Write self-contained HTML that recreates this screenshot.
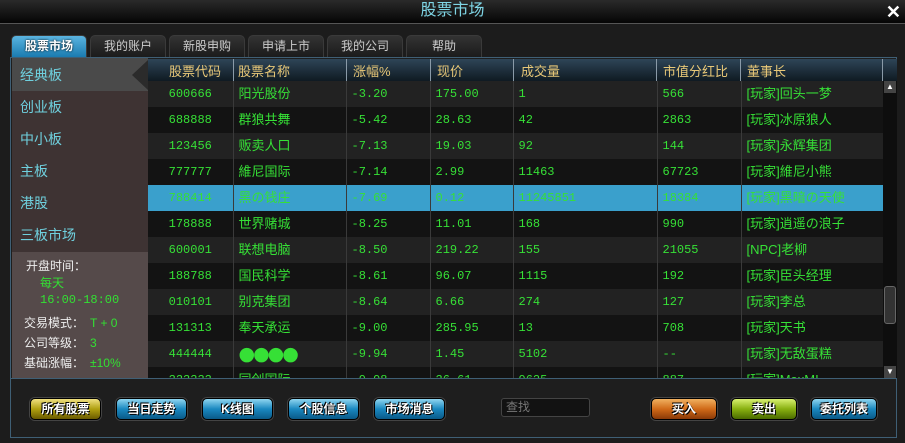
<!DOCTYPE html>
<html><head><meta charset="utf-8"><style>
*{margin:0;padding:0;box-sizing:border-box}
body{width:905px;height:443px;background:#1c1c1c;font-family:"Liberation Sans","Noto Sans CJK SC",sans-serif;position:relative;overflow:hidden;font-size:12px}
.title{position:absolute;left:0;top:0;width:905px;height:24px;background:linear-gradient(#2a2a2a,#050505);border-bottom:1px solid #555;color:#7fd6e6;font-size:16px;text-align:center;line-height:22px}
.close{position:absolute;right:4px;top:1px;color:#fff;font-size:18px;font-weight:bold}
.tab{position:absolute;top:35px;height:22px;width:76px;background:linear-gradient(#333,#1b1b1b);border:1px solid #3a3a3a;border-bottom:none;border-radius:5px 5px 0 0;color:#ccc;text-align:center;line-height:21px;font-size:12px}
.tab.on{background:linear-gradient(#5ab4e0,#1a7bb0);color:#fff;font-weight:bold;text-shadow:0 0 2px #000}
.frame{position:absolute;left:10px;top:57px;width:887px;height:381px;border:1px solid #3f5f75;background:#1e1e1e}
.side{position:absolute;left:12px;top:58px;width:136px;height:320px;background:#3e3333}
.side .it{position:absolute;left:8px;color:#6fd0de;font-size:14px}
.sel{position:absolute;left:12px;top:58px;width:136px;height:33px;background:#4a4a4a}
.notch{position:absolute;left:132px;top:60px;width:0;height:0;border-top:15px solid transparent;border-bottom:15px solid transparent;border-right:16px solid #2b2b2b}
.info{position:absolute;left:12px;top:252px;width:136px;height:126px;background:#554a4a;color:#eee;font-size:12px}
.info div{position:absolute}
.g{color:#33e033}
.hdr{position:absolute;left:148px;top:59px;width:749px;height:22px;background:linear-gradient(#2e4557,#0f1a22);color:#e8c878;font-size:13px}
.hdr span{position:absolute;top:2px}
.hdr i{position:absolute;top:0;width:1px;height:22px;background:#8a9aa8}
table{width:735px;table-layout:fixed;border-collapse:collapse;font-family:"Liberation Mono","Noto Sans CJK SC",monospace;font-size:12px;color:#36e036}
td{height:26px;border-right:1px solid #3a3a3a;padding-left:5px;white-space:nowrap;overflow:hidden;line-height:16px}
tr:nth-child(odd){background:#222}
tr:nth-child(even){background:#131313}
tr.hl{background:#3aa0cc}
td.c{text-align:center;padding-left:0}
td.n{font-family:"Liberation Sans","Noto Sans CJK SC",sans-serif;font-size:13px}
.tb{position:absolute;left:148px;top:81px;width:735px;height:297px;overflow:hidden}
.sb{position:absolute;left:883px;top:81px;width:14px;height:297px;background:#0e0e0e}
.btn{position:absolute;top:398px;height:22px;width:71px;border-radius:5px;color:#fff;font-weight:bold;text-align:center;line-height:21px;font-size:12px;text-shadow:1px 1px 0 #000,-1px -1px 0 #000;border:1px solid #000;box-shadow:0 0 0 1px #444}
.blue{background:linear-gradient(#8fd6f0,#1a88c0 50%,#0a5a88)}
</style></head><body>
<div class="title">股票市场<span class="close">✕</span></div>
<div class="tab on" style="left:11px">股票市场</div>
<div class="tab" style="left:90px">我的账户</div>
<div class="tab" style="left:169px">新股申购</div>
<div class="tab" style="left:248px">申请上市</div>
<div class="tab" style="left:327px">我的公司</div>
<div class="tab" style="left:406px">帮助</div>
<div class="frame"></div>
<div class="side"></div>
<div class="sel"></div><div class="notch"></div>
<div class="side" style="background:none">
<div class="it" style="top:7px">经典板</div>
<div class="it" style="top:39px">创业板</div>
<div class="it" style="top:71px">中小板</div>
<div class="it" style="top:103px">主板</div>
<div class="it" style="top:135px">港股</div>
<div class="it" style="top:167px">三板市场</div>
</div>
<div class="info">
<div style="left:14px;top:5px">开盘时间：</div>
<div class="g" style="left:28px;top:22px">每天</div>
<div class="g" style="left:28px;top:41px;font-family:'Liberation Mono',monospace">16:00-18:00</div>
<div style="left:12px;top:62px">交易模式：<span class="g" style="margin-left:6px">T + 0</span></div>
<div style="left:12px;top:82px">公司等级：<span class="g" style="margin-left:6px">3</span></div>
<div style="left:12px;top:102px">基础涨幅：<span class="g" style="margin-left:6px">±10%</span></div>
</div>
<div class="hdr">
<span style="left:21px">股票代码</span><i style="left:85px"></i>
<span style="left:90px">股票名称</span><i style="left:198px"></i>
<span style="left:205px">涨幅%</span><i style="left:282px"></i>
<span style="left:289px">现价</span><i style="left:365px"></i>
<span style="left:373px">成交量</span><i style="left:508px"></i>
<span style="left:515px">市值分红比</span><i style="left:592px"></i>
<span style="left:599px">董事长</span><i style="left:734px"></i>
</div>
<div class="tb"><table>
<colgroup><col style="width:85px"><col style="width:113px"><col style="width:84px"><col style="width:83px"><col style="width:144px"><col style="width:84px"><col style="width:142px"></colgroup>
<tr><td class="c">600666</td><td class="n">阳光股份</td><td>-3.20</td><td>175.00</td><td>1</td><td>566</td><td class="n">[玩家]回头一梦</td></tr>
<tr><td class="c">688888</td><td class="n">群狼共舞</td><td>-5.42</td><td>28.63</td><td>42</td><td>2863</td><td class="n">[玩家]冰原狼人</td></tr>
<tr><td class="c">123456</td><td class="n">贩卖人口</td><td>-7.13</td><td>19.03</td><td>92</td><td>144</td><td class="n">[玩家]永辉集团</td></tr>
<tr><td class="c">777777</td><td class="n">維尼国际</td><td>-7.14</td><td>2.99</td><td>11463</td><td>67723</td><td class="n">[玩家]維尼小熊</td></tr>
<tr class="hl"><td class="c">788414</td><td class="n">黑の钱庄</td><td>-7.69</td><td>0.12</td><td>11245851</td><td>18384</td><td class="n">[玩家]黑暗の天使</td></tr>
<tr><td class="c">178888</td><td class="n">世界赌城</td><td>-8.25</td><td>11.01</td><td>168</td><td>990</td><td class="n">[玩家]逍遥の浪子</td></tr>
<tr><td class="c">600001</td><td class="n">联想电脑</td><td>-8.50</td><td>219.22</td><td>155</td><td>21055</td><td class="n">[NPC]老柳</td></tr>
<tr><td class="c">188788</td><td class="n">国民科学</td><td>-8.61</td><td>96.07</td><td>1115</td><td>192</td><td class="n">[玩家]臣头经理</td></tr>
<tr><td class="c">010101</td><td class="n">别克集团</td><td>-8.64</td><td>6.66</td><td>274</td><td>127</td><td class="n">[玩家]李总</td></tr>
<tr><td class="c">131313</td><td class="n">奉天承运</td><td>-9.00</td><td>285.95</td><td>13</td><td>708</td><td class="n">[玩家]天书</td></tr>
<tr><td class="c">444444</td><td style="font-size:19px;letter-spacing:-2px;font-family:'DejaVu Sans',sans-serif">●●●●</td><td>-9.94</td><td>1.45</td><td>5102</td><td>--</td><td class="n">[玩家]无敌蛋糕</td></tr>
<tr><td class="c">333333</td><td class="n">同创国际</td><td>-9.98</td><td>36.61</td><td>9625</td><td>887</td><td class="n">[玩家]MaxMI</td></tr>
</table></div>
<div class="sb">
<div style="position:absolute;left:1px;top:0;width:12px;height:12px;background:#444;color:#fff;font-size:8px;text-align:center;line-height:12px">▲</div>
<div style="position:absolute;left:1px;top:205px;width:12px;height:38px;background:#333;border:1px solid #666;border-radius:3px"></div>
<div style="position:absolute;left:1px;top:285px;width:12px;height:12px;background:#444;color:#fff;font-size:8px;text-align:center;line-height:12px">▼</div>
</div>
<div style="position:absolute;left:11px;top:378px;width:885px;height:1px;background:#3f5f75"></div>
<div class="btn" style="left:30px;background:linear-gradient(#f0e080,#b0a010 50%,#6a5a00)">所有股票</div>
<div class="btn blue" style="left:116px">当日走势</div>
<div class="btn blue" style="left:202px">K线图</div>
<div class="btn blue" style="left:288px">个股信息</div>
<div class="btn blue" style="left:374px">市场消息</div>
<div style="position:absolute;left:501px;top:398px;width:89px;height:19px;background:#121212;border:1px solid #444;border-radius:3px;color:#777;padding-left:4px;line-height:17px">查找</div>
<div class="btn" style="left:651px;width:66px;background:linear-gradient(#f0b060,#d06a18 50%,#8a3a08)">买入</div>
<div class="btn" style="left:731px;width:66px;background:linear-gradient(#d8f070,#88b010 50%,#4a6a00)">卖出</div>
<div class="btn blue" style="left:811px;width:66px">委托列表</div>
</body></html>
